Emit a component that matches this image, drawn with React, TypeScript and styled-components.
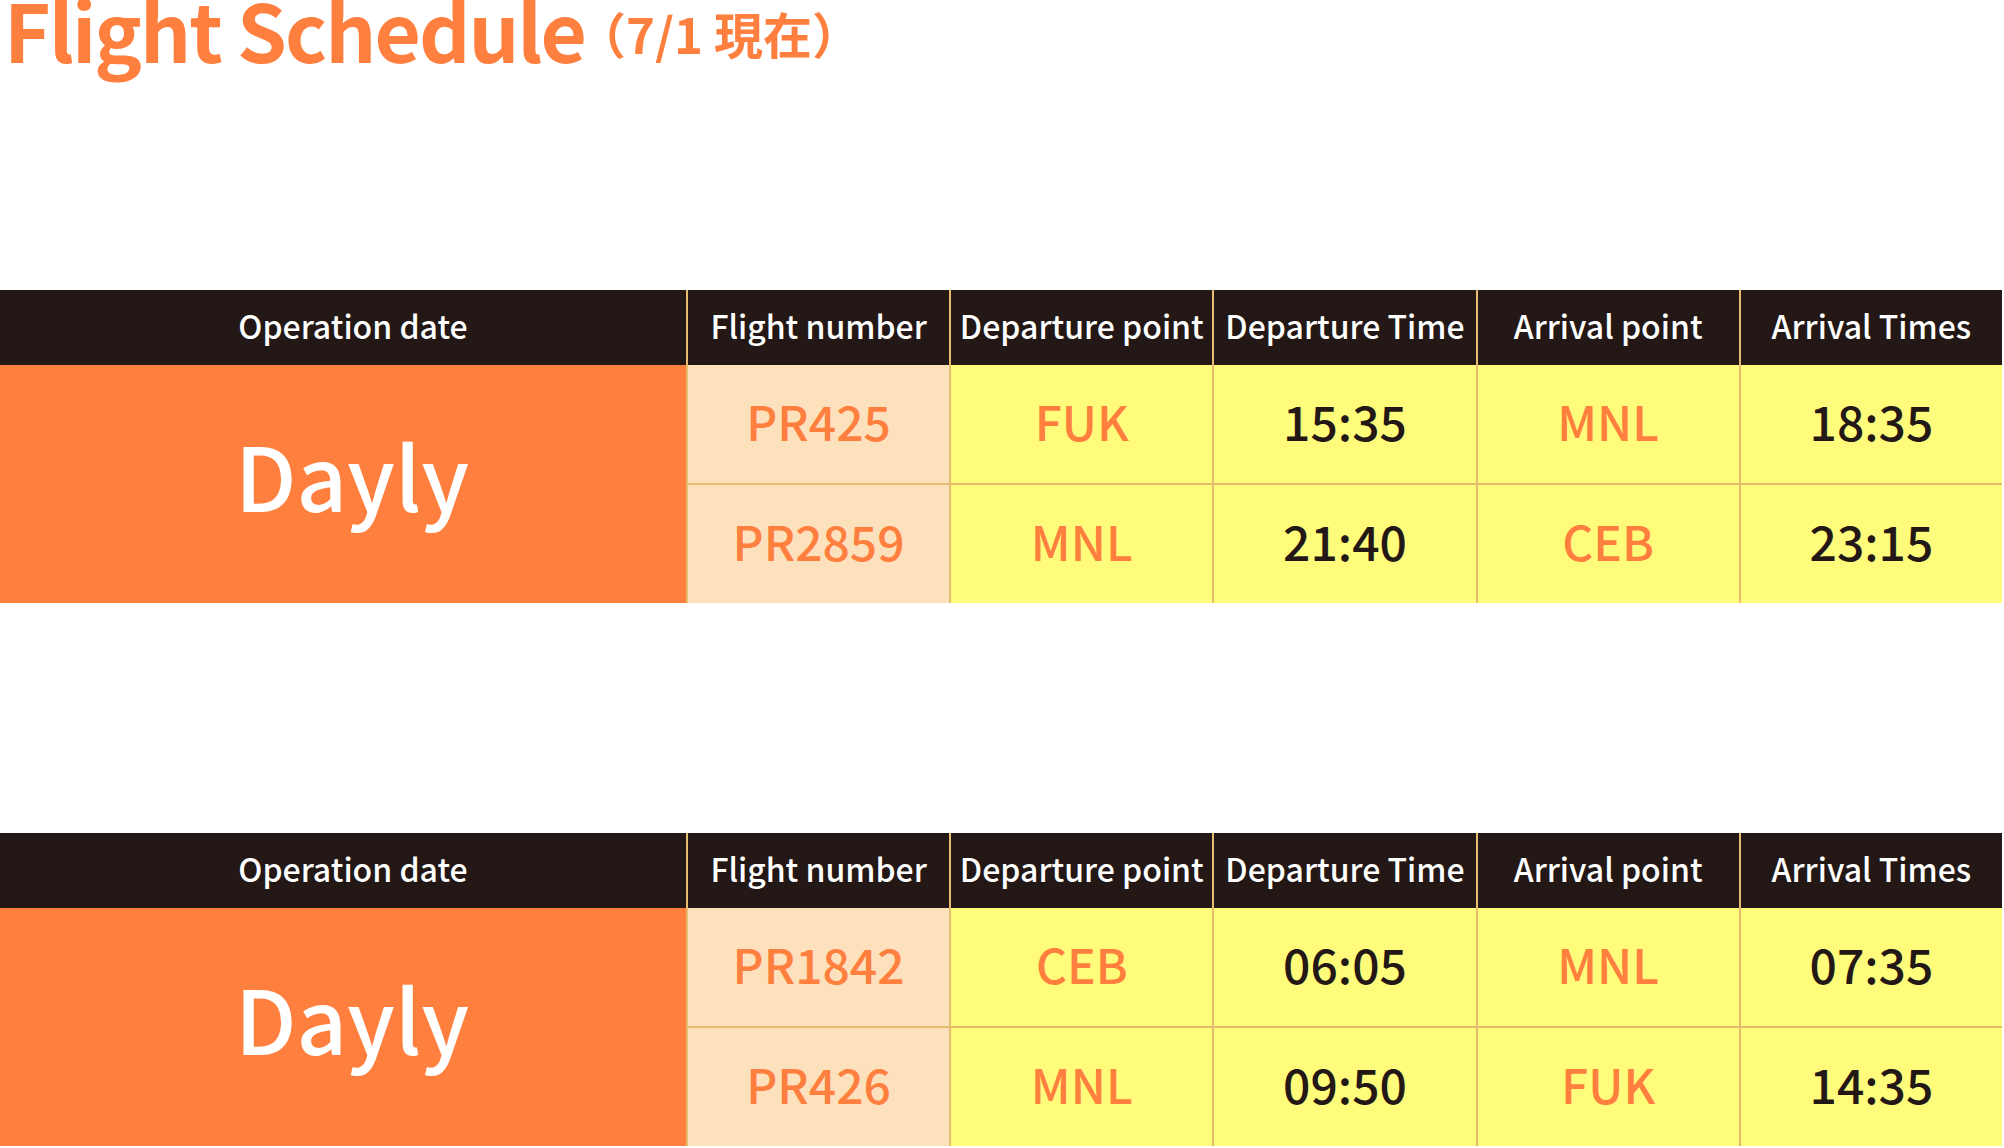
import React from "react";
import styled, { createGlobalStyle } from "styled-components";

const ORANGE = "#ff7f3f";
const PEACH = "#fde1bd";
const YELLOW = "#fffc7c";
const DARK = "#231815";
const LINE = "#e6bd6f";

const GlobalStyle = createGlobalStyle`
  html, body {
    margin: 0;
    padding: 0;
    background: #ffffff;
    overflow: hidden;
  }
  body {
    font-family: "Noto Sans CJK JP", "Noto Sans", sans-serif;
  }
`;

type Flight = {
  number: string;
  from: string;
  depart: string;
  to: string;
  arrive: string;
};

const SCHEDULES: Flight[][] = [
  [
    { number: "PR425", from: "FUK", depart: "15:35", to: "MNL", arrive: "18:35" },
    { number: "PR2859", from: "MNL", depart: "21:40", to: "CEB", arrive: "23:15" },
  ],
  [
    { number: "PR1842", from: "CEB", depart: "06:05", to: "MNL", arrive: "07:35" },
    { number: "PR426", from: "MNL", depart: "09:50", to: "FUK", arrive: "14:35" },
  ],
];

const HEADINGS = [
  "Operation date",
  "Flight number",
  "Departure point",
  "Departure Time",
  "Arrival point",
  "Arrival Times",
];

export default function App() {
  return (
    <>
      <GlobalStyle />
      <Page>
        <Title>
          Flight Schedule
          <TitleNote>（7/1 現在）</TitleNote>
        </Title>
        {SCHEDULES.map((rows, i) => (
          <Table key={`schedule_${i}`} $top={i === 0 ? 222 : 230}>
            <HeaderRow>
              {HEADINGS.map((h, j) => (
                <HeaderCell key={h} $shift={j === 0 ? 20 : 0}>
                  {h}
                </HeaderCell>
              ))}
            </HeaderRow>
            <Body>
              <DateCell>Dayly</DateCell>
              {rows.map((f) => (
                <React.Fragment key={f.number}>
                  <Cell $bg={PEACH} $color={ORANGE}>
                    {f.number}
                  </Cell>
                  <Cell $bg={YELLOW} $color={ORANGE}>
                    {f.from}
                  </Cell>
                  <Cell $bg={YELLOW} $color={DARK}>
                    {f.depart}
                  </Cell>
                  <Cell $bg={YELLOW} $color={ORANGE}>
                    {f.to}
                  </Cell>
                  <Cell $bg={YELLOW} $color={DARK}>
                    {f.arrive}
                  </Cell>
                </React.Fragment>
              ))}
            </Body>
          </Table>
        ))}
      </Page>
    </>
  );
}

const Page = styled.div`
  display: flex;
  flex-direction: column;
  width: 2004px;
  height: 1148px;
  overflow: hidden;
`;

const Title = styled.h1`
  margin: -12px 0 0 4px;
  font-size: 80px;
  line-height: 1;
  font-weight: 700;
  letter-spacing: -2px;
  color: ${ORANGE};
  white-space: nowrap;
`;

const TitleNote = styled.span`
  font-size: 49px;
  font-weight: 700;
  letter-spacing: 0;
  margin-left: -8px;
  vertical-align: 9px;
`;

const Table = styled.div<{ $top: number }>`
  margin-top: ${(p) => p.$top}px;
  width: 2002px;
  flex-shrink: 0;
`;

const columns = "686px repeat(5, 1fr)";

const HeaderRow = styled.div`
  display: grid;
  grid-template-columns: ${columns};
  column-gap: 2px;
  background: ${LINE};
  height: 75px;
`;

const HeaderCell = styled.div<{ $shift: number }>`
  display: flex;
  align-items: center;
  justify-content: center;
  padding: 0 0 5px ${(p) => p.$shift}px;
  background: ${DARK};
  color: #ffffff;
  font-size: 32px;
  font-weight: 500;
  white-space: nowrap;
`;

const Body = styled.div`
  display: grid;
  grid-template-columns: ${columns};
  grid-template-rows: 118px 118px;
  gap: 2px;
  background: ${LINE};
`;

const DateCell = styled.div`
  grid-row: 1 / span 2;
  display: flex;
  align-items: center;
  justify-content: center;
  padding: 0 0 22px 18px;
  background: ${ORANGE};
  color: #ffffff;
  font-size: 88px;
  font-weight: 500;
`;

const Cell = styled.div<{ $bg: string; $color: string }>`
  display: flex;
  align-items: center;
  justify-content: center;
  padding-bottom: 8px;
  background: ${(p) => p.$bg};
  color: ${(p) => p.$color};
  font-size: 48px;
  font-weight: 500;
`;
